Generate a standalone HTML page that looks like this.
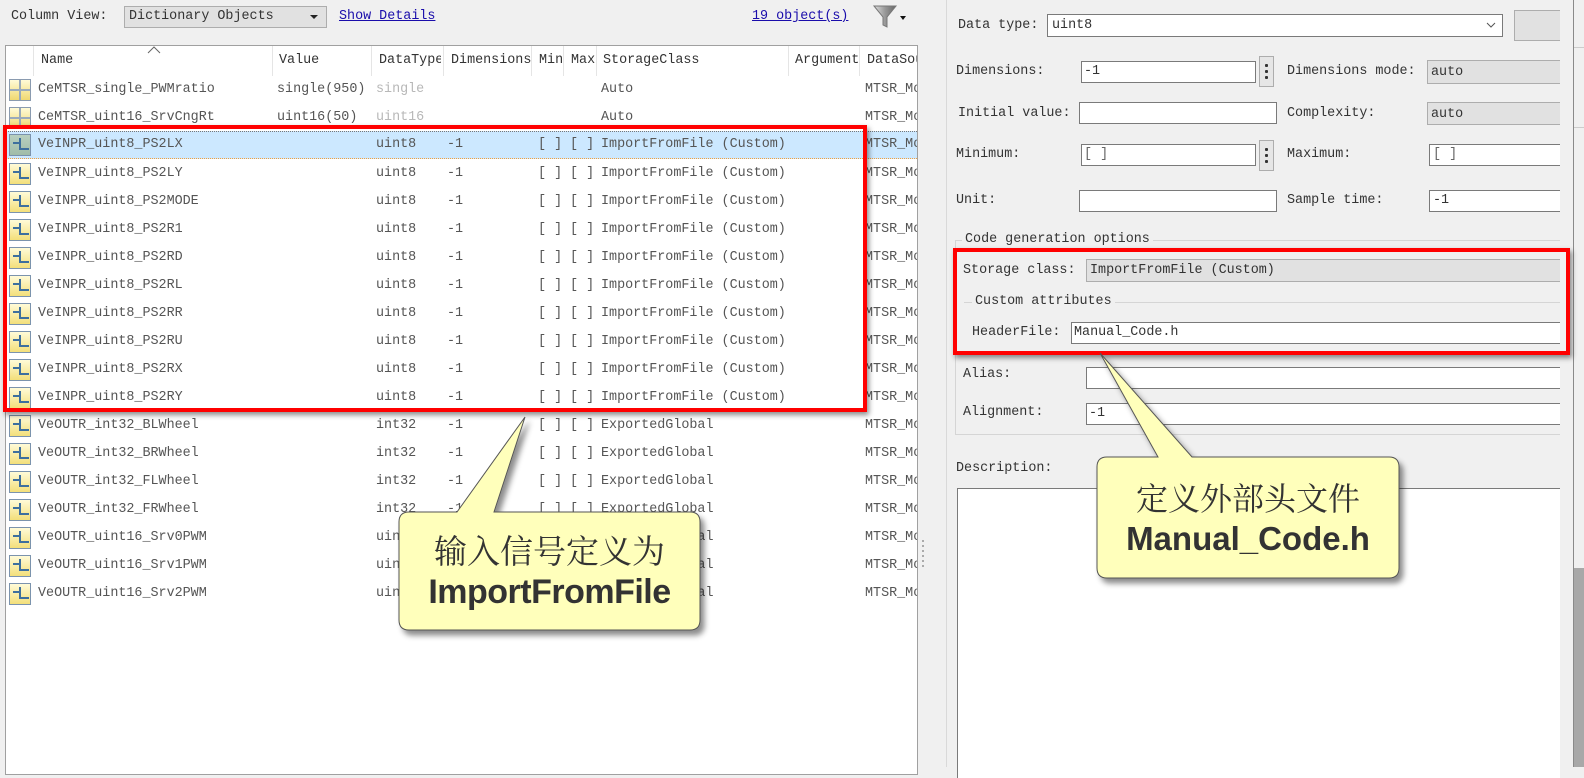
<!DOCTYPE html>
<html><head><meta charset="utf-8"><style>
*{margin:0;padding:0;box-sizing:border-box}
body{width:1584px;height:767px;overflow:hidden;background:#f0f0f0;position:relative;font-family:"Liberation Mono","Noto Sans CJK SC",monospace;font-size:13.4px;color:#333}
.a{position:absolute;white-space:nowrap}
.t{position:absolute;white-space:nowrap;line-height:16px;overflow:hidden}
.inp{position:absolute;background:#fff;border:1px solid #7a7a7a}
.gry{position:absolute;background:#e1e1e1;border:1px solid #adadad}
.dots{position:absolute;background:#e6e6e6;border:1px solid #adadad}
.dots i{position:absolute;left:5px;width:3px;height:3px;background:#333;border-radius:1px}
.row{position:absolute;left:6px;width:911px;height:28px;color:#555}
.row .t{top:6px}
.ico{position:absolute;left:3px;top:3px;width:22px;height:22px;border:1px solid #7b93ad;background:linear-gradient(#fffbd8,#f3df7a)}
.ico b{position:absolute;background:#3d6f9e}
.grid{position:absolute;left:3px;top:3px;width:22px;height:22px;border:1px solid #8a9bb0;background:linear-gradient(#fffbd8,#f0d870)}
.grid:before{content:"";position:absolute;left:9px;top:0;width:2px;height:20px;background:#9aaabb}
.grid:after{content:"";position:absolute;top:9px;left:0;height:2px;width:20px;background:#9aaabb}
.hd{position:absolute;top:0;height:30px;border-right:1px solid #e5e5e5}
.lbl{position:absolute;white-space:nowrap;line-height:16px;color:#333}
</style></head><body>

<!-- top bar -->
<div class="a" style="left:11px;top:9px">Column View:</div>
<div class="a" style="left:124px;top:6px;width:203px;height:22px;background:#e1e1e1;border:1px solid #adadad"></div>
<div class="a" style="left:129px;top:9px">Dictionary Objects</div>
<div class="a" style="left:310px;top:15px;width:0;height:0;border-left:4px solid transparent;border-right:4px solid transparent;border-top:4px solid #222"></div>
<div class="a" style="left:339px;top:9px;color:#1a0dab;text-decoration:underline">Show Details</div>
<div class="a" style="left:752px;top:9px;color:#1a0dab;text-decoration:underline">19 object(s)</div>
<svg class="a" style="left:872px;top:4px" width="36" height="26"><defs><linearGradient id="fg" x1="0" x2="1"><stop offset="0" stop-color="#ddd"/><stop offset=".5" stop-color="#999"/><stop offset="1" stop-color="#666"/></linearGradient></defs><path d="M2,2 L24,2 L15,13 L15,23 L11,21 L11,13 Z" fill="url(#fg)" stroke="#777"/><path d="M28,12 L34,12 L31,16Z" fill="#111"/></svg>

<!-- table -->
<div class="a" style="left:5px;top:45px;width:913px;height:730px;background:#fff;border:1px solid #a0a0a0"></div>
<div class="a" style="left:6px;top:46px;width:911px;height:30px">
 <div class="hd" style="left:0;width:28px"></div>
 <div class="hd" style="left:28px;width:239px"></div>
 <div class="hd" style="left:267px;width:99px"></div>
 <div class="hd" style="left:366px;width:72px"></div>
 <div class="hd" style="left:438px;width:88px"></div>
 <div class="hd" style="left:526px;width:32px"></div>
 <div class="hd" style="left:558px;width:33px"></div>
 <div class="hd" style="left:591px;width:192px"></div>
 <div class="hd" style="left:783px;width:71px"></div>
</div>
<svg class="a" style="left:147px;top:46px" width="14" height="8"><path d="M1,7 L7,1 L13,7" fill="none" stroke="#666"/></svg>
<div class="t" style="left:41px;top:53px;color:#333">Name</div>
<div class="t" style="left:279px;top:53px;color:#333">Value</div>
<div class="t" style="left:379px;top:53px;width:62px;color:#333">DataType</div>
<div class="t" style="left:451px;top:53px;width:80px;color:#333">Dimensions</div>
<div class="t" style="left:539px;top:53px;width:24px;color:#333">Min</div>
<div class="t" style="left:571px;top:53px;width:25px;color:#333">Max</div>
<div class="t" style="left:603px;top:53px;color:#333">StorageClass</div>
<div class="t" style="left:795px;top:53px;width:64px;color:#333">Argument</div>
<div class="t" style="left:867px;top:53px;width:50px;color:#333">DataSource</div>

<div id="rows"></div>

<!-- rows -->
<div class="row" style="top:76px"><div class="grid"></div><div class="t" style="left:32px">CeMTSR_single_PWMratio</div><div class="t" style="left:271px">single(950)</div><div class="t" style="left:370px;color:#b8b8b8">single</div><div class="t" style="left:595px">Auto</div><div class="t" style="left:859px;width:52px">MTSR_Model</div></div>
<div class="row" style="top:104px"><div class="grid"></div><div class="t" style="left:32px">CeMTSR_uint16_SrvCngRt</div><div class="t" style="left:271px">uint16(50)</div><div class="t" style="left:370px;color:#b8b8b8">uint16</div><div class="t" style="left:595px">Auto</div><div class="t" style="left:859px;width:52px">MTSR_Model</div></div>

<div class="row" style="top:131px;background:#cce8ff;border-top:1px dotted #777;border-bottom:1px dotted #f0a040"><div class="ico" style="background:linear-gradient(#b8d0c0,#a0bca8);top:2px"><b style="left:9px;top:3px;width:2px;height:12px"></b><b style="left:9px;top:13px;width:10px;height:2px"></b><b style="left:3px;top:7px;width:6px;height:2px"></b></div><div class="t" style="left:32px;top:5px">VeINPR_uint8_PS2LX</div><div class="t" style="left:370px;top:5px">uint8</div><div class="t" style="left:441px;top:5px">-1</div><div class="t" style="left:532px;top:5px">[ ]</div><div class="t" style="left:564px;top:5px">[ ]</div><div class="t" style="left:595px;top:5px">ImportFromFile (Custom)</div><div class="t" style="left:859px;top:5px;width:52px">MTSR_Model</div></div>

<div class="row" style="top:160px"><div class="ico"><b style="left:9px;top:3px;width:2px;height:12px"></b><b style="left:9px;top:13px;width:10px;height:2px"></b><b style="left:3px;top:7px;width:6px;height:2px"></b></div><div class="t" style="left:32px">VeINPR_uint8_PS2LY</div><div class="t" style="left:370px">uint8</div><div class="t" style="left:441px">-1</div><div class="t" style="left:532px">[ ]</div><div class="t" style="left:564px">[ ]</div><div class="t" style="left:595px">ImportFromFile (Custom)</div><div class="t" style="left:859px;width:52px">MTSR_Model</div></div>
<div class="row" style="top:188px"><div class="ico"><b style="left:9px;top:3px;width:2px;height:12px"></b><b style="left:9px;top:13px;width:10px;height:2px"></b><b style="left:3px;top:7px;width:6px;height:2px"></b></div><div class="t" style="left:32px">VeINPR_uint8_PS2MODE</div><div class="t" style="left:370px">uint8</div><div class="t" style="left:441px">-1</div><div class="t" style="left:532px">[ ]</div><div class="t" style="left:564px">[ ]</div><div class="t" style="left:595px">ImportFromFile (Custom)</div><div class="t" style="left:859px;width:52px">MTSR_Model</div></div>
<div class="row" style="top:216px"><div class="ico"><b style="left:9px;top:3px;width:2px;height:12px"></b><b style="left:9px;top:13px;width:10px;height:2px"></b><b style="left:3px;top:7px;width:6px;height:2px"></b></div><div class="t" style="left:32px">VeINPR_uint8_PS2R1</div><div class="t" style="left:370px">uint8</div><div class="t" style="left:441px">-1</div><div class="t" style="left:532px">[ ]</div><div class="t" style="left:564px">[ ]</div><div class="t" style="left:595px">ImportFromFile (Custom)</div><div class="t" style="left:859px;width:52px">MTSR_Model</div></div>
<div class="row" style="top:244px"><div class="ico"><b style="left:9px;top:3px;width:2px;height:12px"></b><b style="left:9px;top:13px;width:10px;height:2px"></b><b style="left:3px;top:7px;width:6px;height:2px"></b></div><div class="t" style="left:32px">VeINPR_uint8_PS2RD</div><div class="t" style="left:370px">uint8</div><div class="t" style="left:441px">-1</div><div class="t" style="left:532px">[ ]</div><div class="t" style="left:564px">[ ]</div><div class="t" style="left:595px">ImportFromFile (Custom)</div><div class="t" style="left:859px;width:52px">MTSR_Model</div></div>
<div class="row" style="top:272px"><div class="ico"><b style="left:9px;top:3px;width:2px;height:12px"></b><b style="left:9px;top:13px;width:10px;height:2px"></b><b style="left:3px;top:7px;width:6px;height:2px"></b></div><div class="t" style="left:32px">VeINPR_uint8_PS2RL</div><div class="t" style="left:370px">uint8</div><div class="t" style="left:441px">-1</div><div class="t" style="left:532px">[ ]</div><div class="t" style="left:564px">[ ]</div><div class="t" style="left:595px">ImportFromFile (Custom)</div><div class="t" style="left:859px;width:52px">MTSR_Model</div></div>
<div class="row" style="top:300px"><div class="ico"><b style="left:9px;top:3px;width:2px;height:12px"></b><b style="left:9px;top:13px;width:10px;height:2px"></b><b style="left:3px;top:7px;width:6px;height:2px"></b></div><div class="t" style="left:32px">VeINPR_uint8_PS2RR</div><div class="t" style="left:370px">uint8</div><div class="t" style="left:441px">-1</div><div class="t" style="left:532px">[ ]</div><div class="t" style="left:564px">[ ]</div><div class="t" style="left:595px">ImportFromFile (Custom)</div><div class="t" style="left:859px;width:52px">MTSR_Model</div></div>
<div class="row" style="top:328px"><div class="ico"><b style="left:9px;top:3px;width:2px;height:12px"></b><b style="left:9px;top:13px;width:10px;height:2px"></b><b style="left:3px;top:7px;width:6px;height:2px"></b></div><div class="t" style="left:32px">VeINPR_uint8_PS2RU</div><div class="t" style="left:370px">uint8</div><div class="t" style="left:441px">-1</div><div class="t" style="left:532px">[ ]</div><div class="t" style="left:564px">[ ]</div><div class="t" style="left:595px">ImportFromFile (Custom)</div><div class="t" style="left:859px;width:52px">MTSR_Model</div></div>
<div class="row" style="top:356px"><div class="ico"><b style="left:9px;top:3px;width:2px;height:12px"></b><b style="left:9px;top:13px;width:10px;height:2px"></b><b style="left:3px;top:7px;width:6px;height:2px"></b></div><div class="t" style="left:32px">VeINPR_uint8_PS2RX</div><div class="t" style="left:370px">uint8</div><div class="t" style="left:441px">-1</div><div class="t" style="left:532px">[ ]</div><div class="t" style="left:564px">[ ]</div><div class="t" style="left:595px">ImportFromFile (Custom)</div><div class="t" style="left:859px;width:52px">MTSR_Model</div></div>
<div class="row" style="top:384px"><div class="ico"><b style="left:9px;top:3px;width:2px;height:12px"></b><b style="left:9px;top:13px;width:10px;height:2px"></b><b style="left:3px;top:7px;width:6px;height:2px"></b></div><div class="t" style="left:32px">VeINPR_uint8_PS2RY</div><div class="t" style="left:370px">uint8</div><div class="t" style="left:441px">-1</div><div class="t" style="left:532px">[ ]</div><div class="t" style="left:564px">[ ]</div><div class="t" style="left:595px">ImportFromFile (Custom)</div><div class="t" style="left:859px;width:52px">MTSR_Model</div></div>

<div class="row" style="top:412px"><div class="ico"><b style="left:9px;top:3px;width:2px;height:12px"></b><b style="left:9px;top:13px;width:10px;height:2px"></b><b style="left:3px;top:7px;width:6px;height:2px"></b></div><div class="t" style="left:32px">VeOUTR_int32_BLWheel</div><div class="t" style="left:370px">int32</div><div class="t" style="left:441px">-1</div><div class="t" style="left:532px">[ ]</div><div class="t" style="left:564px">[ ]</div><div class="t" style="left:595px">ExportedGlobal</div><div class="t" style="left:859px;width:52px">MTSR_Model</div></div>
<div class="row" style="top:440px"><div class="ico"><b style="left:9px;top:3px;width:2px;height:12px"></b><b style="left:9px;top:13px;width:10px;height:2px"></b><b style="left:3px;top:7px;width:6px;height:2px"></b></div><div class="t" style="left:32px">VeOUTR_int32_BRWheel</div><div class="t" style="left:370px">int32</div><div class="t" style="left:441px">-1</div><div class="t" style="left:532px">[ ]</div><div class="t" style="left:564px">[ ]</div><div class="t" style="left:595px">ExportedGlobal</div><div class="t" style="left:859px;width:52px">MTSR_Model</div></div>
<div class="row" style="top:468px"><div class="ico"><b style="left:9px;top:3px;width:2px;height:12px"></b><b style="left:9px;top:13px;width:10px;height:2px"></b><b style="left:3px;top:7px;width:6px;height:2px"></b></div><div class="t" style="left:32px">VeOUTR_int32_FLWheel</div><div class="t" style="left:370px">int32</div><div class="t" style="left:441px">-1</div><div class="t" style="left:532px">[ ]</div><div class="t" style="left:564px">[ ]</div><div class="t" style="left:595px">ExportedGlobal</div><div class="t" style="left:859px;width:52px">MTSR_Model</div></div>
<div class="row" style="top:496px"><div class="ico"><b style="left:9px;top:3px;width:2px;height:12px"></b><b style="left:9px;top:13px;width:10px;height:2px"></b><b style="left:3px;top:7px;width:6px;height:2px"></b></div><div class="t" style="left:32px">VeOUTR_int32_FRWheel</div><div class="t" style="left:370px">int32</div><div class="t" style="left:441px">-1</div><div class="t" style="left:532px">[ ]</div><div class="t" style="left:564px">[ ]</div><div class="t" style="left:595px">ExportedGlobal</div><div class="t" style="left:859px;width:52px">MTSR_Model</div></div>
<div class="row" style="top:524px"><div class="ico"><b style="left:9px;top:3px;width:2px;height:12px"></b><b style="left:9px;top:13px;width:10px;height:2px"></b><b style="left:3px;top:7px;width:6px;height:2px"></b></div><div class="t" style="left:32px">VeOUTR_uint16_Srv0PWM</div><div class="t" style="left:370px">uint16</div><div class="t" style="left:441px">-1</div><div class="t" style="left:532px">[ ]</div><div class="t" style="left:564px">[ ]</div><div class="t" style="left:595px">ExportedGlobal</div><div class="t" style="left:859px;width:52px">MTSR_Model</div></div>
<div class="row" style="top:552px"><div class="ico"><b style="left:9px;top:3px;width:2px;height:12px"></b><b style="left:9px;top:13px;width:10px;height:2px"></b><b style="left:3px;top:7px;width:6px;height:2px"></b></div><div class="t" style="left:32px">VeOUTR_uint16_Srv1PWM</div><div class="t" style="left:370px">uint16</div><div class="t" style="left:441px">-1</div><div class="t" style="left:532px">[ ]</div><div class="t" style="left:564px">[ ]</div><div class="t" style="left:595px">ExportedGlobal</div><div class="t" style="left:859px;width:52px">MTSR_Model</div></div>
<div class="row" style="top:580px"><div class="ico"><b style="left:9px;top:3px;width:2px;height:12px"></b><b style="left:9px;top:13px;width:10px;height:2px"></b><b style="left:3px;top:7px;width:6px;height:2px"></b></div><div class="t" style="left:32px">VeOUTR_uint16_Srv2PWM</div><div class="t" style="left:370px">uint16</div><div class="t" style="left:441px">-1</div><div class="t" style="left:532px">[ ]</div><div class="t" style="left:564px">[ ]</div><div class="t" style="left:595px">ExportedGlobal</div><div class="t" style="left:859px;width:52px">MTSR_Model</div></div>

<!-- splitter -->
<div class="a" style="left:946px;top:0;width:1px;height:767px;background:#d9d9d9"></div>
<div class="a" style="left:922px;top:540px;width:2px;height:28px;background:repeating-linear-gradient(#aaa 0 2px,transparent 2px 5px)"></div>

<!-- right panel -->
<div class="lbl" style="left:958px;top:18px">Data type:</div>
<div class="inp" style="left:1047px;top:14px;width:456px;height:23px"></div>
<div class="lbl" style="left:1052px;top:18px">uint8</div>
<svg class="a" style="left:1486px;top:22px" width="10" height="7"><path d="M1,1 L5,5 L9,1" fill="none" stroke="#555"/></svg>
<div class="a" style="left:1514px;top:10px;width:46px;height:31px;background:#e1e1e1;border:1px solid #adadad;border-right:none"></div>

<div class="lbl" style="left:956px;top:64px">Dimensions:</div>
<div class="inp" style="left:1081px;top:61px;width:175px;height:22px"></div>
<div class="lbl" style="left:1084px;top:64px">-1</div>
<div class="dots" style="left:1259px;top:56px;width:15px;height:31px"><i style="top:7px"></i><i style="top:13px"></i><i style="top:19px"></i></div>
<div class="lbl" style="left:1287px;top:64px">Dimensions mode:</div>
<div class="gry" style="left:1427px;top:60px;width:133px;height:24px;border-right:none"></div>
<div class="lbl" style="left:1431px;top:65px">auto</div>

<div class="lbl" style="left:958px;top:106px">Initial value:</div>
<div class="inp" style="left:1079px;top:102px;width:198px;height:22px"></div>
<div class="lbl" style="left:1287px;top:106px">Complexity:</div>
<div class="gry" style="left:1427px;top:102px;width:133px;height:23px;border-right:none"></div>
<div class="lbl" style="left:1431px;top:107px">auto</div>

<div class="lbl" style="left:956px;top:147px">Minimum:</div>
<div class="inp" style="left:1081px;top:144px;width:175px;height:22px"></div>
<div class="lbl" style="left:1084px;top:147px;color:#666">[ ]</div>
<div class="dots" style="left:1259px;top:140px;width:15px;height:31px"><i style="top:7px"></i><i style="top:13px"></i><i style="top:19px"></i></div>
<div class="lbl" style="left:1287px;top:147px">Maximum:</div>
<div class="inp" style="left:1429px;top:144px;width:131px;height:22px;border-right:none"></div>
<div class="lbl" style="left:1433px;top:147px;color:#666">[ ]</div>

<div class="lbl" style="left:956px;top:193px">Unit:</div>
<div class="inp" style="left:1079px;top:190px;width:198px;height:22px"></div>
<div class="lbl" style="left:1287px;top:193px">Sample time:</div>
<div class="inp" style="left:1429px;top:190px;width:131px;height:22px;border-right:none"></div>
<div class="lbl" style="left:1433px;top:193px">-1</div>

<!-- group box -->
<div class="a" style="left:955px;top:240px;width:605px;height:195px;border:1px solid #d5d5d5;border-right:none"></div>
<div class="lbl" style="left:962px;top:232px;background:#f0f0f0;padding:0 3px">Code generation options</div>
<div class="lbl" style="left:963px;top:263px">Storage class:</div>
<div class="gry" style="left:1086px;top:259px;width:474px;height:23px;border-right:none"></div>
<div class="lbl" style="left:1090px;top:263px">ImportFromFile (Custom)</div>
<div class="a" style="left:964px;top:302px;width:596px;height:1px;background:#d5d5d5"></div>
<div class="lbl" style="left:972px;top:294px;background:#f0f0f0;padding:0 3px">Custom attributes</div>
<div class="lbl" style="left:972px;top:325px">HeaderFile:</div>
<div class="inp" style="left:1071px;top:322px;width:489px;height:22px;border-right:none"></div>
<div class="lbl" style="left:1074px;top:325px">Manual_Code.h</div>

<div class="lbl" style="left:963px;top:367px">Alias:</div>
<div class="inp" style="left:1086px;top:367px;width:474px;height:22px;border-right:none"></div>
<div class="lbl" style="left:963px;top:405px">Alignment:</div>
<div class="inp" style="left:1086px;top:403px;width:474px;height:22px;border-right:none"></div>
<div class="lbl" style="left:1089px;top:406px">-1</div>

<div class="lbl" style="left:956px;top:461px">Description:</div>
<div class="a" style="left:957px;top:488px;width:603px;height:290px;background:#fff;border-top:1px solid #7a7a7a;border-left:1px solid #7a7a7a"></div>

<!-- scrollbar -->
<div class="a" style="left:1573px;top:0;width:1px;height:767px;background:#8a8a8a"></div>
<div class="a" style="left:1574px;top:47px;width:10px;height:1px;background:#ccc"></div>
<div class="a" style="left:1574px;top:127px;width:10px;height:1px;background:#ccc"></div>
<div class="a" style="left:1574px;top:568px;width:10px;height:199px;background:#a8a8a8"></div>

<!-- red boxes -->
<div class="a" style="left:3px;top:125px;width:864px;height:287px;border:4px solid #ff0000;box-shadow:2px 3px 5px rgba(0,0,0,.45)"></div>
<div class="a" style="left:953px;top:248px;width:617px;height:107px;border:4px solid #ff0000;box-shadow:2px 3px 5px rgba(0,0,0,.45)"></div>

<!-- callouts -->
<svg class="a" style="left:0;top:0" width="1584" height="767">
<defs><filter id="sh" x="-10%" y="-10%" width="130%" height="130%"><feDropShadow dx="4" dy="5" stdDeviation="3" flood-color="#000" flood-opacity=".45"/></filter></defs>
<path d="M409,512 L457,512 L525,417 L494,512 L690,512 Q700,512 700,522 L700,620 Q700,630 690,630 L409,630 Q399,630 399,620 L399,522 Q399,512 409,512 Z" fill="#ffffbb" stroke="#555" stroke-width="1" filter="url(#sh)"/>
<path d="M1107,457 L1158,457 L1100,353 L1192,457 L1389,457 Q1399,457 1399,467 L1399,568 Q1399,578 1389,578 L1107,578 Q1097,578 1097,568 L1097,467 Q1097,457 1107,457 Z" fill="#ffffbb" stroke="#555" stroke-width="1" filter="url(#sh)"/>
</svg>
<div class="a" style="left:399px;top:530px;width:301px;text-align:center;font-family:'Noto Serif CJK SC','Noto Sans CJK SC',serif;font-size:33px;line-height:40px;color:#333">输入信号定义为</div>
<div class="a" style="left:399px;top:572px;width:301px;text-align:center;font-family:'Liberation Sans',sans-serif;font-weight:bold;font-size:34px;line-height:40px;color:#333;letter-spacing:-0.5px">ImportFromFile</div>
<div class="a" style="left:1097px;top:477px;width:302px;text-align:center;font-family:'Noto Serif CJK SC','Noto Sans CJK SC',serif;font-size:32px;line-height:40px;color:#333">定义外部头文件</div>
<div class="a" style="left:1097px;top:519px;width:302px;text-align:center;font-family:'Liberation Sans',sans-serif;font-weight:bold;font-size:33px;line-height:40px;color:#333">Manual_Code.h</div>
</body></html>
